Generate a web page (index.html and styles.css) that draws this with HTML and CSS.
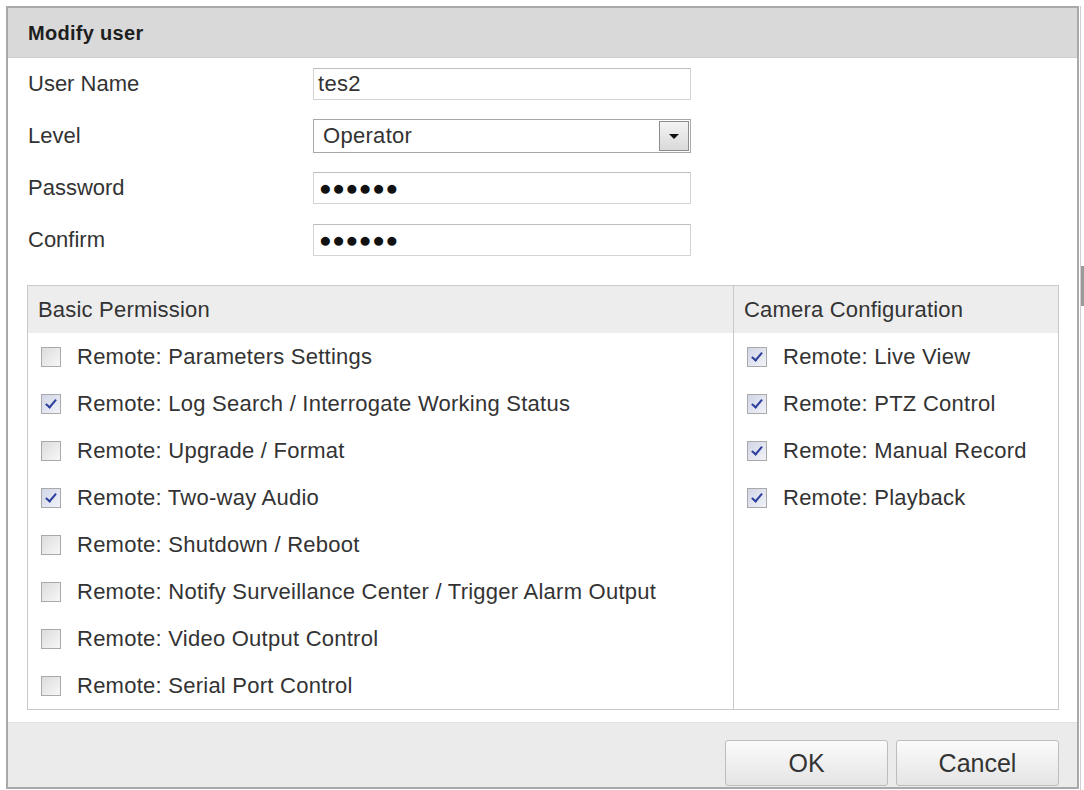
FILE: index.html
```html
<!DOCTYPE html>
<html lang="en">
<head>
    <meta charset="UTF-8">
    <title>Modify user</title>
    <link rel="stylesheet" href="styles.css">
</head>
<body>
    <div class="page">
        <div class="dialog">
            <div class="dialog-title">Modify user</div>

            <div class="form">
                <div class="form-row">
                    <div class="form-label">User Name</div>
                    <div class="field">tes2</div>
                </div>
                <div class="form-row">
                    <div class="form-label">Level</div>
                    <div class="field select">
                        <span>Operator</span>
                        <span class="select-btn"><span class="arrow"></span></span>
                    </div>
                </div>
                <div class="form-row">
                    <div class="form-label">Password</div>
                    <div class="field dots">●●●●●●</div>
                </div>
                <div class="form-row">
                    <div class="form-label">Confirm</div>
                    <div class="field dots">●●●●●●</div>
                </div>
            </div>

            <div class="perm-box">
                <div class="perm-col perm-basic">
                    <div class="perm-header">Basic Permission</div>
                    <div class="perm-item"><span class="check"></span>Remote: Parameters Settings</div>
                    <div class="perm-item"><span class="check checked"></span>Remote: Log Search / Interrogate Working Status</div>
                    <div class="perm-item"><span class="check"></span>Remote: Upgrade / Format</div>
                    <div class="perm-item"><span class="check checked"></span>Remote: Two-way Audio</div>
                    <div class="perm-item"><span class="check"></span>Remote: Shutdown / Reboot</div>
                    <div class="perm-item"><span class="check"></span>Remote: Notify Surveillance Center / Trigger Alarm Output</div>
                    <div class="perm-item"><span class="check"></span>Remote: Video Output Control</div>
                    <div class="perm-item"><span class="check"></span>Remote: Serial Port Control</div>
                </div>
                <div class="perm-col perm-camera">
                    <div class="perm-header">Camera Configuration</div>
                    <div class="perm-item"><span class="check checked"></span>Remote: Live View</div>
                    <div class="perm-item"><span class="check checked"></span>Remote: PTZ Control</div>
                    <div class="perm-item"><span class="check checked"></span>Remote: Manual Record</div>
                    <div class="perm-item"><span class="check checked"></span>Remote: Playback</div>
                </div>
            </div>

            <div class="dialog-footer">
                <button class="btn">OK</button>
                <button class="btn">Cancel</button>
            </div>
        </div>
        <div class="scroll-edge"><div class="scroll-thumb"></div></div>
    </div>
</body>
</html>
```

FILE: styles.css
```css
body {
    margin: 0;
    background: #ffffff;
    font-family: "Liberation Sans", Arial, sans-serif;
    color: #333;
}
.page {
    display: flex;
    padding: 6px 0 0 6px;
}
.dialog {
    width: 1069px;
    height: 779px;
    border: 2px solid #a9a9a9;
    display: flex;
    flex-direction: column;
    background: #fff;
}
.dialog-title {
    height: 49px;
    line-height: 50px;
    padding-left: 20px;
    background: #d9d9d9;
    border-bottom: 1px solid #cfcfcf;
    font-size: 20px;
    letter-spacing: 0.3px;
    font-weight: bold;
    color: #1e1e1e;
}
.form {
    display: flex;
    flex-direction: column;
    gap: 20px;
    padding: 10px 0 0 20px;
}
.form-row {
    display: flex;
    align-items: center;
    height: 32px;
}
.form-label {
    width: 285px;
    font-size: 22px;
    color: #333;
}
.field {
    box-sizing: border-box;
    width: 378px;
    height: 32px;
    border: 1px solid #d4d4d4;
    border-top-color: #bdbdbd;
    padding-left: 4px;
    line-height: 30px;
    font-size: 22px;
    letter-spacing: 0.3px;
    color: #333;
    background: #fff;
}
.select {
    height: 34px;
    display: flex;
    justify-content: space-between;
    align-items: center;
    border-color: #a8a8a8;
    padding-left: 9px;
    padding-right: 1px;
}
.select-btn {
    box-sizing: border-box;
    width: 30px;
    height: 30px;
    border: 1px solid #8c8c8c;
    background: linear-gradient(#f4f4f4, #d9d9d9);
    display: flex;
    align-items: center;
    justify-content: center;
}
.arrow {
    width: 0;
    height: 0;
    border-left: 5px solid transparent;
    border-right: 5px solid transparent;
    border-top: 5px solid #111;
}
.dots {
    font-size: 21px;
    letter-spacing: 0.6px;
    padding-left: 5px;
    color: #111;
}
.perm-box {
    display: flex;
    margin: 29px 0 0 19px;
    width: 1032px;
    height: 425px;
    box-sizing: border-box;
    border: 1px solid #c9c9c9;
}
.perm-col {
    display: flex;
    flex-direction: column;
}
.perm-basic {
    width: 705px;
    border-right: 1px solid #c9c9c9;
}
.perm-camera {
    flex: 1;
}
.perm-header {
    height: 47px;
    line-height: 47px;
    padding-left: 10px;
    background: #ededed;
    font-size: 22px;
    letter-spacing: 0.2px;
    color: #333;
}
.perm-item {
    display: flex;
    align-items: center;
    gap: 16px;
    height: 47.2px;
    padding-left: 13px;
    font-size: 22px;
    letter-spacing: 0.25px;
    color: #333;
}
.check {
    box-sizing: border-box;
    width: 20px;
    height: 20px;
    border: 1px solid #a9a9a9;
    background: linear-gradient(135deg, #dcdcdc, #f7f7f7);
    position: relative;
    flex-shrink: 0;
}
.check.checked {
    background: linear-gradient(135deg, #d0d5e6, #f2f3f8);
}
.check.checked::after {
    content: "";
    position: absolute;
    left: 6px;
    top: 2px;
    width: 4px;
    height: 9px;
    border-right: 2px solid #2d3f9c;
    border-bottom: 2px solid #2d3f9c;
    transform: rotate(40deg);
}
.dialog-footer {
    margin-top: 12px;
    flex: 1;
    background: #ebebeb;
    border-top: 1px solid #e2e2e2;
    display: flex;
    justify-content: flex-end;
    align-items: flex-end;
    gap: 8px;
    padding: 0 18px 1px 0;
}
.btn {
    width: 163px;
    height: 46px;
    border: 1px solid #bdbdbd;
    border-radius: 3px;
    background: linear-gradient(#fbfbfb, #e4e4e4);
    font-family: "Liberation Sans", Arial, sans-serif;
    font-size: 25px;
    color: #333;
}
.scroll-edge {
    width: 3px;
    height: 784px;
    margin-left: 1px;
    border-left: 1px solid #d0d0d0;
}
.scroll-thumb {
    margin-top: 260px;
    height: 40px;
    background: #9a9a9a;
}
```
